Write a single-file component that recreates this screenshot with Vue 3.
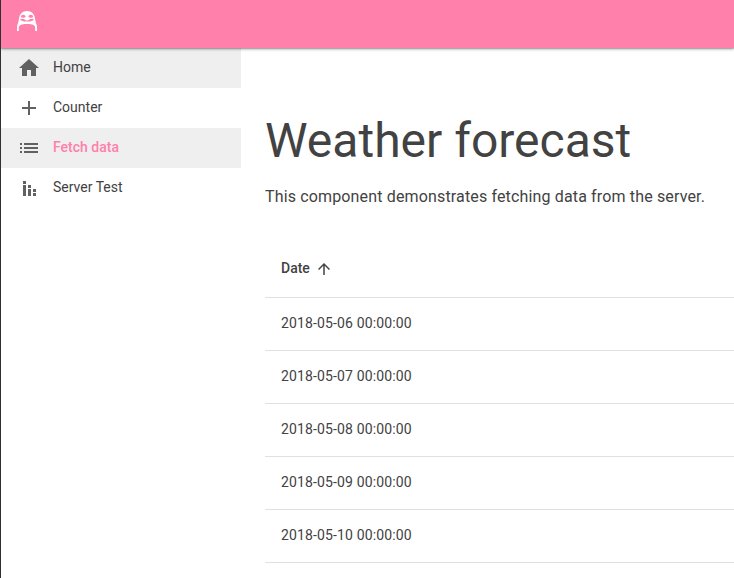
<script setup>
const links = [
  { label: 'Home', shaded: true, path: 'M10 20v-6h4v6h5v-8h3L12 3 2 12h3v8z' },
  { label: 'Counter', path: 'M19 13h-6v6h-2v-6H5v-2h6V5h2v6h6v2z' },
  { label: 'Fetch data', shaded: true, active: true, path: 'M3 13h2v-2H3v2zm0 4h2v-2H3v2zm0-8h2V7H3v2zm4 4h14v-2H7v2zm0 4h14v-2H7v2zM7 7v2h14V7H7z' },
  { label: 'Server Test', path: 'M6 9h3v11H6zM6 5h3v3H6zM11 13h3v7h-3zM11 9h3v3h-3zM16 17h3v3h-3zM16 13h3v3h-3z' },
]
const dates = ['2018-05-06 00:00:00', '2018-05-07 00:00:00', '2018-05-08 00:00:00', '2018-05-09 00:00:00', '2018-05-10 00:00:00']
</script>

<template>
  <div class="app">
    <header class="bar">
      <svg class="logo" viewBox="0 0 20 20">
        <path class="arch" d="M0 20v-3.500c0-2 .6-3.500 1.300-5L2 7.500C2.500 3 5.500 0 10 0s7.500 3 8 7.500l.7 4c.7 1.500 1.300 3 1.300 5V20h-1.800v-3c0-2.700-2.200-4-8.200-4s-8.200 1.300-8.200 4v3z" />
        <ellipse class="eye" cx="6.200" cy="5.300" rx="2.200" ry="1.500" />
        <ellipse class="eye" cx="13.800" cy="5.300" rx="2.200" ry="1.500" />
        <path class="beak" d="M3.500 7.800l3 .2L10 9.800 13.500 8l3-.2v1.400L13 10.500H7L3.500 9.200z" />
      </svg>
    </header>
    <div class="body">
      <nav class="drawer">
        <a v-for="link in links" :key="link.label" class="link" :class="{ shaded: link.shaded, active: link.active }">
          <svg class="icon" viewBox="0 0 24 24"><path :d="link.path" /></svg>
          <span>{{ link.label }}</span>
        </a>
      </nav>
      <main class="content">
        <h1>Weather forecast</h1>
        <p>This component demonstrates fetching data from the server.</p>
        <table>
          <thead>
            <tr>
              <th>
                <span class="sort">Date
                  <svg viewBox="0 0 24 24"><path d="M4 12l1.410 1.410L11 7.830V20h2V7.830l5.580 5.590L20 12l-8-8-8 8z" /></svg>
                </span>
              </th>
            </tr>
          </thead>
          <tbody>
            <tr v-for="date in dates" :key="date"><td>{{ date }}</td></tr>
          </tbody>
        </table>
      </main>
    </div>
  </div>
</template>

<style>
body { margin: 0; overflow: hidden; }
</style>

<style scoped>
.app {
  box-sizing: border-box;
  height: 578px;
  overflow: hidden;
  border-left: 1px solid #303033;
  background: #fff;
  color: #424242;
  font-family: Roboto, sans-serif;
}
.bar {
  position: relative;
  z-index: 1;
  box-sizing: border-box;
  height: 48px;
  padding: 11px 16px;
  background: #ff80ab;
  box-shadow: 0 1px 3px rgba(0, 0, 0, .35), 0 1px 1px rgba(0, 0, 0, .14);
}
.logo { display: block; width: 20px; height: 20px; }
.arch { fill: #fff; }
.eye, .beak { fill: #ff80ab; }
.body { display: flex; }
.drawer { width: 240px; flex: none; }
.link {
  display: flex;
  align-items: center;
  height: 40px;
  padding-left: 16px;
  font-size: 14px;
  line-height: 20px;
}
.link span { padding-bottom: 2px; }
.shaded { background: #efefef; }
.active span { color: #ff80ab; font-weight: 500; }
.icon { width: 24px; height: 24px; margin-right: 12px; fill: #616161; }
.content { flex: 1; min-width: 0; padding: 65px 0 0 24px; }
h1 { margin: 0 0 16px; font-size: 48px; font-weight: 400; line-height: 56px; white-space: nowrap; }
p { margin: 0; font-size: 16px; line-height: 24px; letter-spacing: .15px; white-space: nowrap; }
table { width: 100%; margin-top: 31px; border-collapse: separate; border-spacing: 0; font-size: 14px; }
th, td { box-sizing: border-box; padding: 0 16px 2px; border-bottom: 1px solid #e0e0e0; text-align: left; line-height: 20px; }
th { height: 58px; font-weight: 500; }
td { height: 53px; letter-spacing: .14px; }
.sort { display: flex; align-items: center; height: 20px; }
.sort svg { width: 18px; height: 18px; margin: 2px 0 0 5px; fill: #424242; }
</style>
